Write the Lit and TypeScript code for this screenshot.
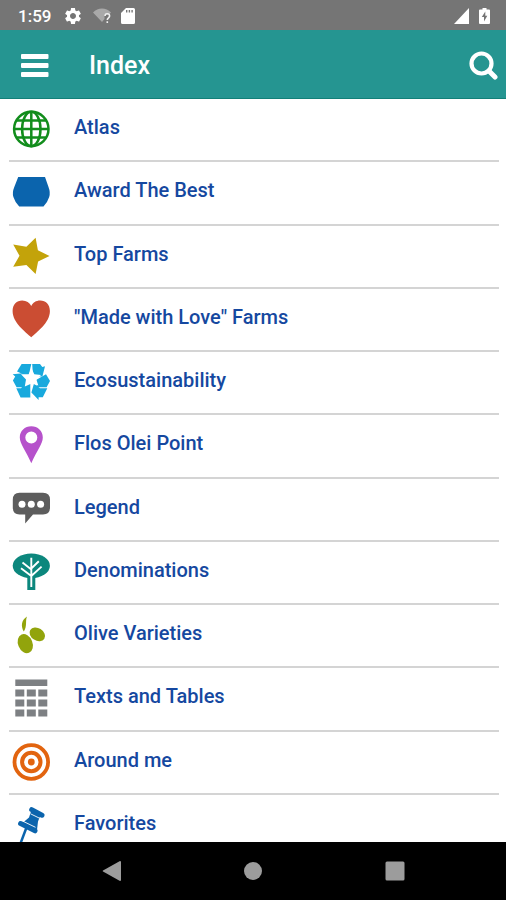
import { LitElement, html, css, svg, SVGTemplateResult } from "lit";
import { customElement } from "lit/decorators.js";

interface Entry {
  label: string;
  color: string;
  icon: SVGTemplateResult;
}

const entries: Entry[] = [
  {
    label: "Atlas",
    color: "#128d1c",
    icon: svg`<g fill="none" stroke="currentColor" stroke-width="2.5">
      <circle cx="19.300" cy="19" r="17.200"/><ellipse cx="19.300" cy="19" rx="9.200" ry="17.200"/>
      <path d="M19.300 1.600v34.800M1.900 19h34.800M4.800 10.500h29M4.800 27.500h29"/></g>`,
  },
  {
    label: "Award The Best",
    color: "#0b64ad",
    icon: svg`<path fill="currentColor" d="M6.200 4H33L36.500 14Q38.600 19.500 37.200 24Q35.500 29.500 31.500 33.500H7.200Q3.100 29.500 1.400 24Q0 19.500 2.300 14z"/>`,
  },
  {
    label: "Top Farms",
    color: "#c3a30a",
    icon: svg`<path fill="currentColor" d="M23.600.8L25.900 13.200 37.500 19 26.100 24.600 23.600 37 14.400 28.100 1.200 29.700 7.500 18.700 1.200 7.600 14.400 9.800z"/>`,
  },
  {
    label: "\"Made with Love\" Farms",
    color: "#cb4d33",
    icon: svg`<path fill="currentColor" d="M19.300 37.300C14 32 .6 23 .6 11C.6 4.500 4.800.5 10.200.5C14.500.5 17.600 2.600 19.300 6C20.800 2.600 24 .5 28.200.5C33.700.5 37.900 4.500 37.900 11C37.900 23 24.500 32 19.300 37.300z"/>`,
  },
  {
    label: "Ecosustainability",
    color: "#18a9dd",
    icon: svg`<g fill="currentColor">
      <path d="M9.600 1H19.300L16.500 13.500 5 8.500z"/>
      <path d="M20.200 1H28L30.300 4 33 3.200 30.400 13.600 21 13z"/>
      <path d="M.7 11.200L13 10 16 21.500 11.500 24.200H4.600L.9 17.500 3.200 13.600z"/>
      <path d="M24 17L34 11.300 38 18 34.600 24.200H25z"/>
      <path d="M4.300 25.200H9L13 20.500H18.300V34.400H8.600z"/>
      <path d="M19.400 29.400L22 20.500 28 25.200H35.300L30.800 34.200H26.600V37z"/></g>
      <path fill="#fff" d="M19.600 5.500L22.300 11.200 29 12 24.400 16.400 26.300 22.500 19.600 20.500 12.800 23.500 14 16.600 9 11.200 16.600 11.200z"/>`,
  },
  {
    label: "Flos Olei Point",
    color: "#b652cb",
    icon: svg`<path fill="currentColor" fill-rule="evenodd" d="M19.300.3C25.800.3 30.800 5 30.800 11.500C30.800 18 24.500 25 19.300 37.300C14.200 25 7.800 18 7.800 11.500C7.800 5 12.800.3 19.300.3zM19.300 5.600a6 6 0 1 0 0 12a6 6 0 1 0 0-12z"/>`,
  },
  {
    label: "Legend",
    color: "#5d5d5d",
    icon: svg`<path fill="currentColor" d="M7.500 2.700H31Q38 2.700 38 9.700V17.500Q38 24.500 31 24.500H21L13.200 33.500V24.500H7.500Q.8 24.500.8 17.500V9.700Q.8 2.700 7.500 2.700z"/>
      <g fill="#fff"><circle cx="10" cy="14.200" r="3.500"/><circle cx="19.300" cy="14.200" r="3.500"/><circle cx="28.600" cy="14.200" r="3.500"/></g>`,
  },
  {
    label: "Denominations",
    color: "#0c877d",
    icon: svg`<ellipse fill="currentColor" cx="19.300" cy="12.800" rx="18.600" ry="12.400"/>
      <path fill="currentColor" d="M15.300 21h8v16h-8z"/>
      <path fill="none" stroke="#fff" stroke-width="1.900" d="M19.300 4.800V34M19.300 16.500L10.500 9.600M19.300 15.500L26.800 8.200M19.300 23L9 15.200M19.300 23L29.600 13.600"/>`,
  },
  {
    label: "Olive Varieties",
    color: "#92a40c",
    icon: svg`<g fill="currentColor"><path d="M15 .5C9.500 4 8.500 10 11.800 15.600C15.500 10 13 5 15 .5z"/>
      <ellipse cx="13.300" cy="27.600" rx="7.200" ry="9.900" transform="rotate(-22 13.300 27.600)"/>
      <ellipse cx="25.300" cy="18.300" rx="8.300" ry="6.200" transform="rotate(32 25.300 18.300)"/></g>`,
  },
  {
    label: "Texts and Tables",
    color: "#7d8083",
    icon: svg`<path fill="currentColor" d="M3.300.5H35.300V7H3.300zM3.300 10.500h9v7h-9zM14.800 10.500h9v7h-9zM26.300 10.500h9v7h-9zM3.300 20.500h9v7h-9zM14.800 20.500h9v7h-9zM26.300 20.500h9v7h-9zM3.300 30.500h9v7h-9zM14.800 30.500h9v7h-9zM26.300 30.500h9v7h-9z"/>`,
  },
  {
    label: "Around me",
    color: "#e2640f",
    icon: svg`<g fill="none" stroke="currentColor"><circle cx="19.300" cy="19" r="16.800" stroke-width="3.800"/><circle cx="19.300" cy="19" r="9.200" stroke-width="4"/></g><circle cx="19.300" cy="19" r="3.400" fill="currentColor"/>`,
  },
  {
    label: "Favorites",
    color: "#0b64ad",
    icon: svg`<g fill="none" stroke="currentColor" stroke-linecap="round">
      <path stroke-width="5" d="M19.700 3.600L30 9.200"/><path stroke-width="5" d="M8.600 17.600L23 24.800"/>
      <path stroke-width="2.500" stroke-linecap="butt" d="M14.500 21.500L7.500 40"/></g>
      <path fill="currentColor" d="M19.500 4L28.500 9 26 15.500 25 24 10.500 17 17 11.500z"/>
      <path stroke="#fff" stroke-width=".9" d="M18.500 7.800L27.500 12.200M11.500 15.500L23.500 21.300"/>`,
  },
];

@customElement("app-root")
export class AppRoot extends LitElement {
  static styles = css`
    :host {
      display: flex;
      flex-direction: column;
      height: 100vh;
      background: #fff;
      font-family: Roboto, "Liberation Sans", sans-serif;
      font-weight: 500;
    }
    svg {
      display: block;
      flex: none;
    }
    button {
      display: flex;
      padding: 0;
      border: 0;
      background: none;
      color: inherit;
    }
    .status {
      flex: none;
      display: flex;
      align-items: center;
      justify-content: space-between;
      height: 30px;
      padding: 2px 16px 0 18px;
      box-sizing: border-box;
      background: #757575;
      color: #fff;
      font-size: 17px;
    }
    .group {
      display: flex;
      align-items: center;
      gap: 10px;
    }
    .time {
      margin-right: 2px;
    }
    .bar {
      flex: none;
      display: flex;
      align-items: center;
      height: 69px;
      padding: 3px 8px 0 21px;
      box-sizing: border-box;
      background: #259591;
      border-bottom: 1px solid #128078;
      color: #fff;
    }
    .title {
      flex: 1;
      margin: 0 0 0 40px;
      font-size: 25px;
      line-height: 32px;
      font-weight: 500;
    }
    .scroll {
      flex: 1;
      min-height: 0;
      overflow: hidden;
    }
    .list {
      display: grid;
      grid-auto-rows: 1fr;
      min-height: 759px;
      margin: 0;
      padding: 0 7px 0 9px;
      list-style: none;
    }
    .item {
      border-bottom: 2px solid #d4d4d4;
    }
    .link {
      display: flex;
      align-items: flex-start;
      gap: 24px;
      padding: 11px 0 0 3px;
      color: #1548a0;
      font-size: 20px;
      line-height: 34px;
      text-decoration: none;
    }
    .nav {
      flex: none;
      display: flex;
      align-items: center;
      justify-content: space-between;
      height: 58px;
      padding: 0 20%;
      background: #000;
      color: #9c9c9c;
    }
  `;

  render() {
    return html`
      <div class="status">
        <div class="group">
          <span class="time">1:59</span>
          <svg width="20" height="20" viewBox="0 0 24 24" fill="#fff" aria-hidden="true">
            <path d="M19.140 12.940c.04-.3.06-.61.06-.94 0-.32-.02-.64-.07-.94l2.030-1.580c.18-.14.23-.41.12-.61l-1.920-3.320c-.12-.22-.37-.29-.59-.22l-2.390.96c-.5-.38-1.030-.7-1.620-.94l-.36-2.540c-.04-.24-.24-.41-.48-.41h-3.840c-.24 0-.43.17-.47.41l-.36 2.540c-.59.24-1.130.57-1.620.94l-2.390-.96c-.22-.08-.47 0-.59.22L2.740 8.870c-.12.21-.08.47.12.61l2.030 1.580c-.05.3-.09.63-.09.94s.02.64.07.94l-2.030 1.580c-.18.14-.23.41-.12.61l1.920 3.320c.12.22.37.29.59.22l2.390-.96c.5.38 1.030.7 1.620.94l.36 2.540c.05.24.24.41.48.41h3.840c.24 0 .44-.17.47-.41l.36-2.540c.59-.24 1.130-.56 1.620-.94l2.390.96c.22.08.47 0 .59-.22l1.920-3.320c.12-.22.07-.47-.12-.61l-2.010-1.580zM12 15.600c-1.980 0-3.600-1.620-3.600-3.600s1.620-3.600 3.600-3.600 3.600 1.620 3.600 3.600-1.620 3.600-3.600 3.600z"/>
          </svg>
          <svg width="18" height="16" viewBox="0 0 18 16" aria-hidden="true">
            <path fill="#a9a9a9" d="M0 4.500C5-.8 13-.8 18 4.500L16 6.500H11.500V11L9 14z"/>
            <path fill="none" stroke="#f0f0f0" stroke-width="1.600" d="M12 8c0-3 4.600-3 4.600 0c0 1.800-2.300 1.800-2.300 4M14.300 13.200v1.800"/>
          </svg>
          <svg width="14" height="16" viewBox="0 0 14 16" fill="#fff" aria-hidden="true">
            <path fill-rule="evenodd" d="M5 0H12.500Q14 0 14 1.500V14.500Q14 16 12.500 16H1.500Q0 16 0 14.500V5zM5 2V4.500h1.400V2zM7.700 2V4.500h1.400V2zM10.400 2V4.500h1.400V2z"/>
          </svg>
        </div>
        <div class="group">
          <svg width="15" height="16" viewBox="0 0 15 16" fill="#fff" aria-hidden="true"><path d="M15 0V16H0z"/></svg>
          <svg width="11" height="16" viewBox="0 0 11 16" fill="#fff" aria-hidden="true">
            <path fill-rule="evenodd" d="M3.500 0h4v1.500H10Q11 1.500 11 2.500V15Q11 16 10 16H1Q0 16 0 15V2.500Q0 1.500 1 1.500H3.500zM6.300 3.500L2.800 9H5v4.500L8.300 7.800H6.300z"/>
          </svg>
        </div>
      </div>

      <header class="bar">
        <button type="button" aria-label="Menu">
          <svg width="28" height="24" viewBox="0 0 28 24" fill="#fff">
            <rect x="0" y="0" width="27.500" height="5" rx="1"/>
            <rect x="0" y="9" width="27.500" height="5" rx="1"/>
            <rect x="0" y="18" width="27.500" height="5" rx="1"/>
          </svg>
        </button>
        <h1 class="title">Index</h1>
        <button type="button" aria-label="Search">
          <svg width="29" height="29" viewBox="0 0 29 29" fill="none" stroke="#fff">
            <circle cx="12.500" cy="12.500" r="10" stroke-width="4.200"/>
            <path stroke-width="5" stroke-linecap="round" d="M20 20L26 26"/>
          </svg>
        </button>
      </header>

      <main class="scroll">
        <ul class="list">
          ${entries.map(
            (e) => html`<li class="item">
              <a class="link" href="#">
                <svg width="38" height="40" viewBox="0 0 38 40" overflow="visible" color=${e.color} aria-hidden="true">${e.icon}</svg>
                <span>${e.label}</span>
              </a>
            </li>`
          )}
        </ul>
      </main>

      <nav class="nav">
        <button type="button" aria-label="Back">
          <svg width="20" height="22" viewBox="0 0 20 22" fill="currentColor"><path d="M19 1Q20 1 20 2V20Q20 21 19 21L2 11.500Q1.300 11 2 10.500z"/></svg>
        </button>
        <button type="button" aria-label="Home">
          <svg width="18" height="18" viewBox="0 0 18 18" fill="currentColor"><circle cx="9" cy="9" r="9"/></svg>
        </button>
        <button type="button" aria-label="Recent apps">
          <svg width="20" height="20" viewBox="0 0 20 20" fill="currentColor"><rect x="0.500" y="0.500" width="19" height="19" rx="1.500"/></svg>
        </button>
      </nav>
    `;
  }
}
